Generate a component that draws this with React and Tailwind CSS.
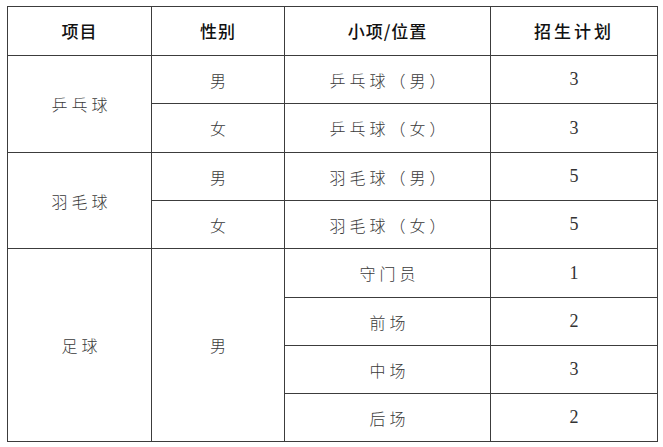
import React from 'react';

const cell = 'border border-[#3c3c3c] text-center align-middle p-0';
const body = 'text-[16px] text-[#3a3a3a] font-light tracking-[4px] pl-[4px]';
const num = "text-[18px] text-[#333] font-['Liberation_Serif',serif]";

export default function App() {
    return (
        <div className="w-[663px] h-[447px] bg-white pt-[6px] pl-[7px] font-['Noto_Sans_CJK_SC','Noto_Sans',sans-serif]">
            <table className="table-fixed border-collapse w-[650px]">
                <colgroup>
                    <col className="w-[144px]" />
                    <col className="w-[133px]" />
                    <col className="w-[206px]" />
                    <col className="w-[167px]" />
                </colgroup>
                <thead>
                    <tr className="h-[49px] text-[17px] font-medium text-[#111] tracking-[1px]">
                        <th className={cell + ' font-medium'}>项目</th>
                        <th className={cell + ' font-medium'}>性别</th>
                        <th className={cell + ' font-medium'}>小项/位置</th>
                        <th className={cell + ' font-medium tracking-[3px]'}>招生计划</th>
                    </tr>
                </thead>
                <tbody>
                    {/* 乒乓球 */}
                    <tr className="h-[48px]">
                        <td rowSpan={2} className={cell + ' ' + body}>乒乓球</td>
                        <td className={cell + ' ' + body}>男</td>
                        <td className={cell + ' ' + body}>乒乓球（男）</td>
                        <td className={cell + ' ' + num}>3</td>
                    </tr>
                    <tr className="h-[49px]">
                        <td className={cell + ' ' + body}>女</td>
                        <td className={cell + ' ' + body}>乒乓球（女）</td>
                        <td className={cell + ' ' + num}>3</td>
                    </tr>
                    {/* 羽毛球 */}
                    <tr className="h-[48px]">
                        <td rowSpan={2} className={cell + ' ' + body}>羽毛球</td>
                        <td className={cell + ' ' + body}>男</td>
                        <td className={cell + ' ' + body}>羽毛球（男）</td>
                        <td className={cell + ' ' + num}>5</td>
                    </tr>
                    <tr className="h-[48px]">
                        <td className={cell + ' ' + body}>女</td>
                        <td className={cell + ' ' + body}>羽毛球（女）</td>
                        <td className={cell + ' ' + num}>5</td>
                    </tr>
                    {/* 足球 */}
                    <tr className="h-[49px]">
                        <td rowSpan={4} className={cell + ' ' + body}>足球</td>
                        <td rowSpan={4} className={cell + ' ' + body}>男</td>
                        <td className={cell + ' ' + body}>守门员</td>
                        <td className={cell + ' ' + num}>1</td>
                    </tr>
                    <tr className="h-[48px]">
                        <td className={cell + ' ' + body}>前场</td>
                        <td className={cell + ' ' + num}>2</td>
                    </tr>
                    <tr className="h-[48px]">
                        <td className={cell + ' ' + body}>中场</td>
                        <td className={cell + ' ' + num}>3</td>
                    </tr>
                    <tr className="h-[48px]">
                        <td className={cell + ' ' + body}>后场</td>
                        <td className={cell + ' ' + num}>2</td>
                    </tr>
                </tbody>
            </table>
        </div>
    );
}
